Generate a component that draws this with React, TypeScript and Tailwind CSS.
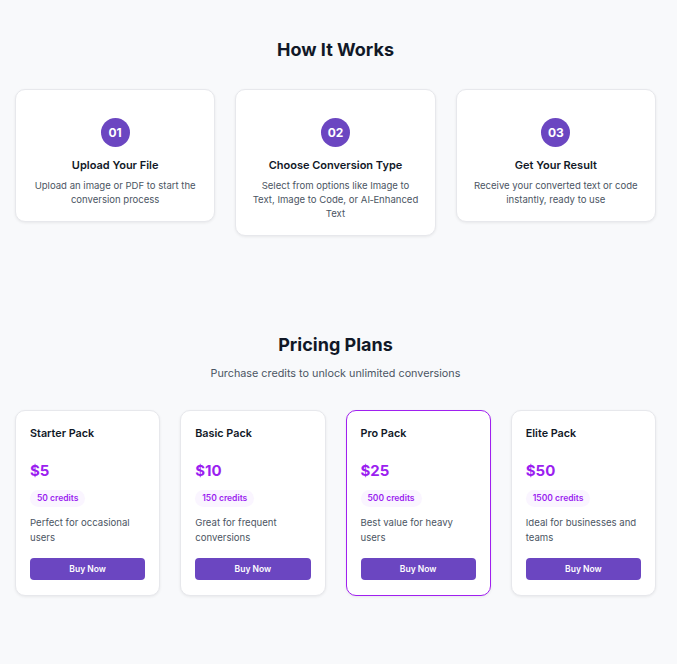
import React from "react";

const steps = [
  { n: "01", title: "Upload Your File", desc: "Upload an image or PDF to start the conversion process" },
  { n: "02", title: "Choose Conversion Type", desc: "Select from options like Image to Text, Image to Code, or AI\u2011Enhanced Text" },
  { n: "03", title: "Get Your Result", desc: "Receive your converted text or code instantly, ready to use" },
];

const plans = [
  { name: "Starter Pack", price: "$5", credits: "50 credits", desc: "Perfect for occasional users", featured: false },
  { name: "Basic Pack", price: "$10", credits: "150 credits", desc: "Great for frequent conversions", featured: false },
  { name: "Pro Pack", price: "$25", credits: "500 credits", desc: "Best value for heavy users", featured: true },
  { name: "Elite Pack", price: "$50", credits: "1500 credits", desc: "Ideal for businesses and teams", featured: false },
];

export default function App() {
  return (
    <div className="min-h-screen bg-[#f8f9fb] font-['Inter',sans-serif] text-[#111827]">
      <div className="ml-[15px] w-[641px]">
        <section className="pt-[38px]">
          <h2 className="text-center text-[18px] font-bold leading-[24px] text-[#111827]">How It Works</h2>
          <div className="mt-[27px] grid grid-cols-3 items-start gap-5">
            {steps.map((s) => (
              <div
                key={s.n}
                className="flex flex-col items-center rounded-[10px] border border-[#e7e8ec] bg-white px-[14px] pb-[14px] pt-[28px] text-center shadow-[0_1px_3px_rgba(0,0,0,0.07)]"
              >
                <div className="flex h-[29px] w-[29px] items-center justify-center rounded-full bg-[#6b46c1] text-[12px] font-bold text-white">
                  {s.n}
                </div>
                <h3 className="mt-[11px] text-[11px] font-semibold leading-[14px] text-[#111827]">{s.title}</h3>
                <p className="mt-[7px] text-[9.55px] leading-[14px] text-[#4b5563]">{s.desc}</p>
              </div>
            ))}
          </div>
        </section>

        <section className="pt-[97px] pb-[69px]">
          <h2 className="text-center text-[18px] font-bold leading-[24px] text-[#111827]">Pricing Plans</h2>
          <p className="mt-[9px] text-center text-[10.8px] leading-[16px] text-[#4b5563]">
            Purchase credits to unlock unlimited conversions
          </p>
          <div className="mt-[28px] grid grid-cols-4 gap-5">
            {plans.map((p) => (
              <div
                key={p.name}
                className={
                  p.featured
                    ? "flex flex-col rounded-[10px] border border-[#a020f0] bg-white px-[14px] pb-[15px] pt-[15px] shadow-[0_1px_3px_rgba(0,0,0,0.07)]"
                    : "flex flex-col rounded-[10px] border border-[#e7e8ec] bg-white px-[14px] pb-[15px] pt-[15px] shadow-[0_1px_3px_rgba(0,0,0,0.07)]"
                }
              >
                <h3 className="text-[10.8px] font-semibold leading-[16px] text-[#111827]">{p.name}</h3>
                <div className="mt-[19px] text-[15px] font-bold leading-[20px] text-[#9b1ff0]">{p.price}</div>
                <div className="mt-[9px] flex">
                  <span className="flex h-[17px] items-center rounded-full bg-[#faf5ff] px-[7px] text-[8.5px] font-semibold text-[#9b1ff0]">
                    {p.credits}
                  </span>
                </div>
                <p className="mt-[8px] text-[9.6px] leading-[15px] text-[#4b5563]">{p.desc}</p>
                <button className="mt-[13px] h-[22px] w-full rounded-[4px] bg-[#6b46c1] text-[8.5px] font-semibold text-white">
                  Buy Now
                </button>
              </div>
            ))}
          </div>
        </section>
      </div>
    </div>
  );
}
